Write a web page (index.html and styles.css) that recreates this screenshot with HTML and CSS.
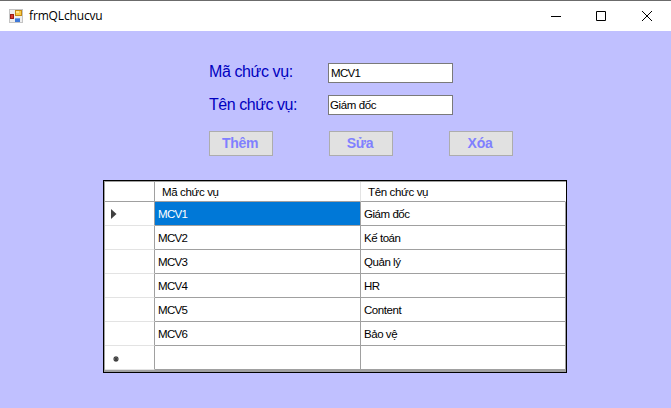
FILE: index.html
```html
<!DOCTYPE html>
<html lang="vi">
<head>
<meta charset="utf-8">
<title>frmQLchucvu</title>
<link rel="stylesheet" href="styles.css">
</head>
<body>
<div class="window">
  <header class="titlebar">
    <svg class="app-icon" width="14" height="14" viewBox="0 0 14 14">
      <rect x=".5" y=".5" width="13" height="13" fill="#eeeeee" stroke="#c4c4c4"/>
      <rect x="1.500" y="5.500" width="3" height="4" fill="#d93a2e" stroke="#9c1c16"/>
      <rect x="6.500" y="1.500" width="6" height="5" fill="#f9cb45" stroke="#c48b16"/>
      <rect x="7" y="2" width="3" height="2" fill="#ffe590"/>
      <rect x="6" y="9" width="5" height="4" fill="#3f78d8"/>
      <rect x="6" y="9" width="5" height="1" fill="#77a4ec"/>
    </svg>
    <span class="title">frmQLchucvu</span>
    <svg class="controls" width="104" height="12" viewBox="0 0 104 12" fill="none" stroke="#000">
      <path d="M1 6.500h10"/>
      <path d="M46.500 1.500h9v9h-9z"/>
      <path d="M92 1l10 10M102 1l-10 10"/>
    </svg>
  </header>
  <main class="form">
    <div class="fields">
      <label class="label" for="code">Mã chức vụ:</label>
      <input class="input code" id="code" value="MCV1">
      <label class="label name-label" for="name">Tên chức vụ:</label>
      <input class="input" id="name" value="Giám đốc">
    </div>
    <div class="buttons">
      <button class="button">Thêm</button>
      <button class="button">Sửa</button>
      <button class="button">Xóa</button>
    </div>
    <div class="grid">
      <div class="row head"><div class="mark"></div><div class="cell first">Mã chức vụ</div><div class="cell">Tên chức vụ</div></div>
      <div class="row"><div class="mark"><svg width="6" height="10" viewBox="0 0 6 10"><path d="M0 0L5.500 5L0 10z" fill="#404040"/></svg></div><div class="cell first selected">MCV1</div><div class="cell">Giám đốc</div></div>
      <div class="row"><div class="mark"></div><div class="cell first">MCV2</div><div class="cell">Kế toán</div></div>
      <div class="row"><div class="mark"></div><div class="cell first">MCV3</div><div class="cell">Quản lý</div></div>
      <div class="row"><div class="mark"></div><div class="cell first">MCV4</div><div class="cell">HR</div></div>
      <div class="row"><div class="mark"></div><div class="cell first">MCV5</div><div class="cell">Content</div></div>
      <div class="row"><div class="mark"></div><div class="cell first">MCV6</div><div class="cell">Bảo vệ</div></div>
      <div class="row new"><div class="mark"><svg width="8" height="8" viewBox="0 0 8 8"><path d="M4 1v6M1 4h6M2 2l4 4M6 2L2 6" stroke="#404040" stroke-width="1.200"/></svg></div><div class="cell first"></div><div class="cell"></div></div>
    </div>
  </main>
</div>
</body>
</html>
```
FILE: styles.css
```css
* { box-sizing: border-box; }
body { margin: 0; font-family: "Liberation Sans", sans-serif; color: #000; }
.window { width: 671px; height: 408px; background: #c0c0ff; overflow: hidden; }
.titlebar {
  display: flex; align-items: center; height: 31px;
  padding: 0 17px 0 9px; background: #fff; border-top: 1px solid #6b6b6b;
}
.app-icon { margin-top: -1px; }
.title { flex: 1; margin-left: 6px; font: 12px/16px "Open Sans", sans-serif; letter-spacing: -.15px; }
.controls { margin-top: -1px; }
.form { padding: 32px 0 0 103px; }
.fields {
  display: grid; grid-template-columns: 119px 125px; row-gap: 12px;
  padding-left: 106px;
}
.label {
  height: 20px; font-size: 16px; line-height: 18px; letter-spacing: -.4px;
  color: #0000c0; white-space: nowrap;
}
.name-label { line-height: 20px; letter-spacing: -.45px; }
.input {
  width: 125px; height: 20px; padding: 0 1px; border: 1px solid #7a7a7a; border-radius: 0;
  background: #fff; font: 11.5px/18px "Liberation Sans", sans-serif; letter-spacing: -.4px;
  color: #000; outline: 0;
}
.code { padding-left: 2px; letter-spacing: -.7px; }
.buttons { display: flex; gap: 56px; margin: 16px 0 24px 106px; }
.button {
  width: 64px; height: 25px; padding: 0 2px 1px 0; border: 1px solid #adadad; border-radius: 0;
  background: #e1e1e1; font: bold 14px/22px "Liberation Sans", sans-serif;
  letter-spacing: -.3px; color: #8080ff;
}
.grid {
  width: 464px; height: 193px; border: 1px solid #000;
  background: #a0a0a0; box-shadow: inset 1px 1px #a0a0a0; font-size: 11.5px;
}
.row { display: grid; grid-template-columns: 50px 206px 205px; height: 24px; margin-left: 1px; }
.row > div { height: 24px; border-right: 1px solid #a0a0a0; border-bottom: 1px solid #a0a0a0; background: #fff; }
.row .mark { display: flex; align-items: center; padding: 1px 0 0 6px; border-bottom-color: #e3e3e3; }
.row.new .mark { padding: 3px 0 0 7px; }
.cell { padding-left: 3px; line-height: 25px; letter-spacing: -.45px; white-space: nowrap; }
.first { letter-spacing: -.7px; }
.head { height: 20px; margin-top: 1px; }
.row.head > div { height: 20px; }
.head .cell { padding-left: 7px; line-height: 21px; letter-spacing: -.35px; }
.row.head .mark { border-bottom-color: #a0a0a0; }
.row.head .first { border-right-color: #e3e3e3; }
.row.head .cell:last-child { border-right-color: #fff; }
.row > .selected { background: #0078d7; color: #fff; }
```
